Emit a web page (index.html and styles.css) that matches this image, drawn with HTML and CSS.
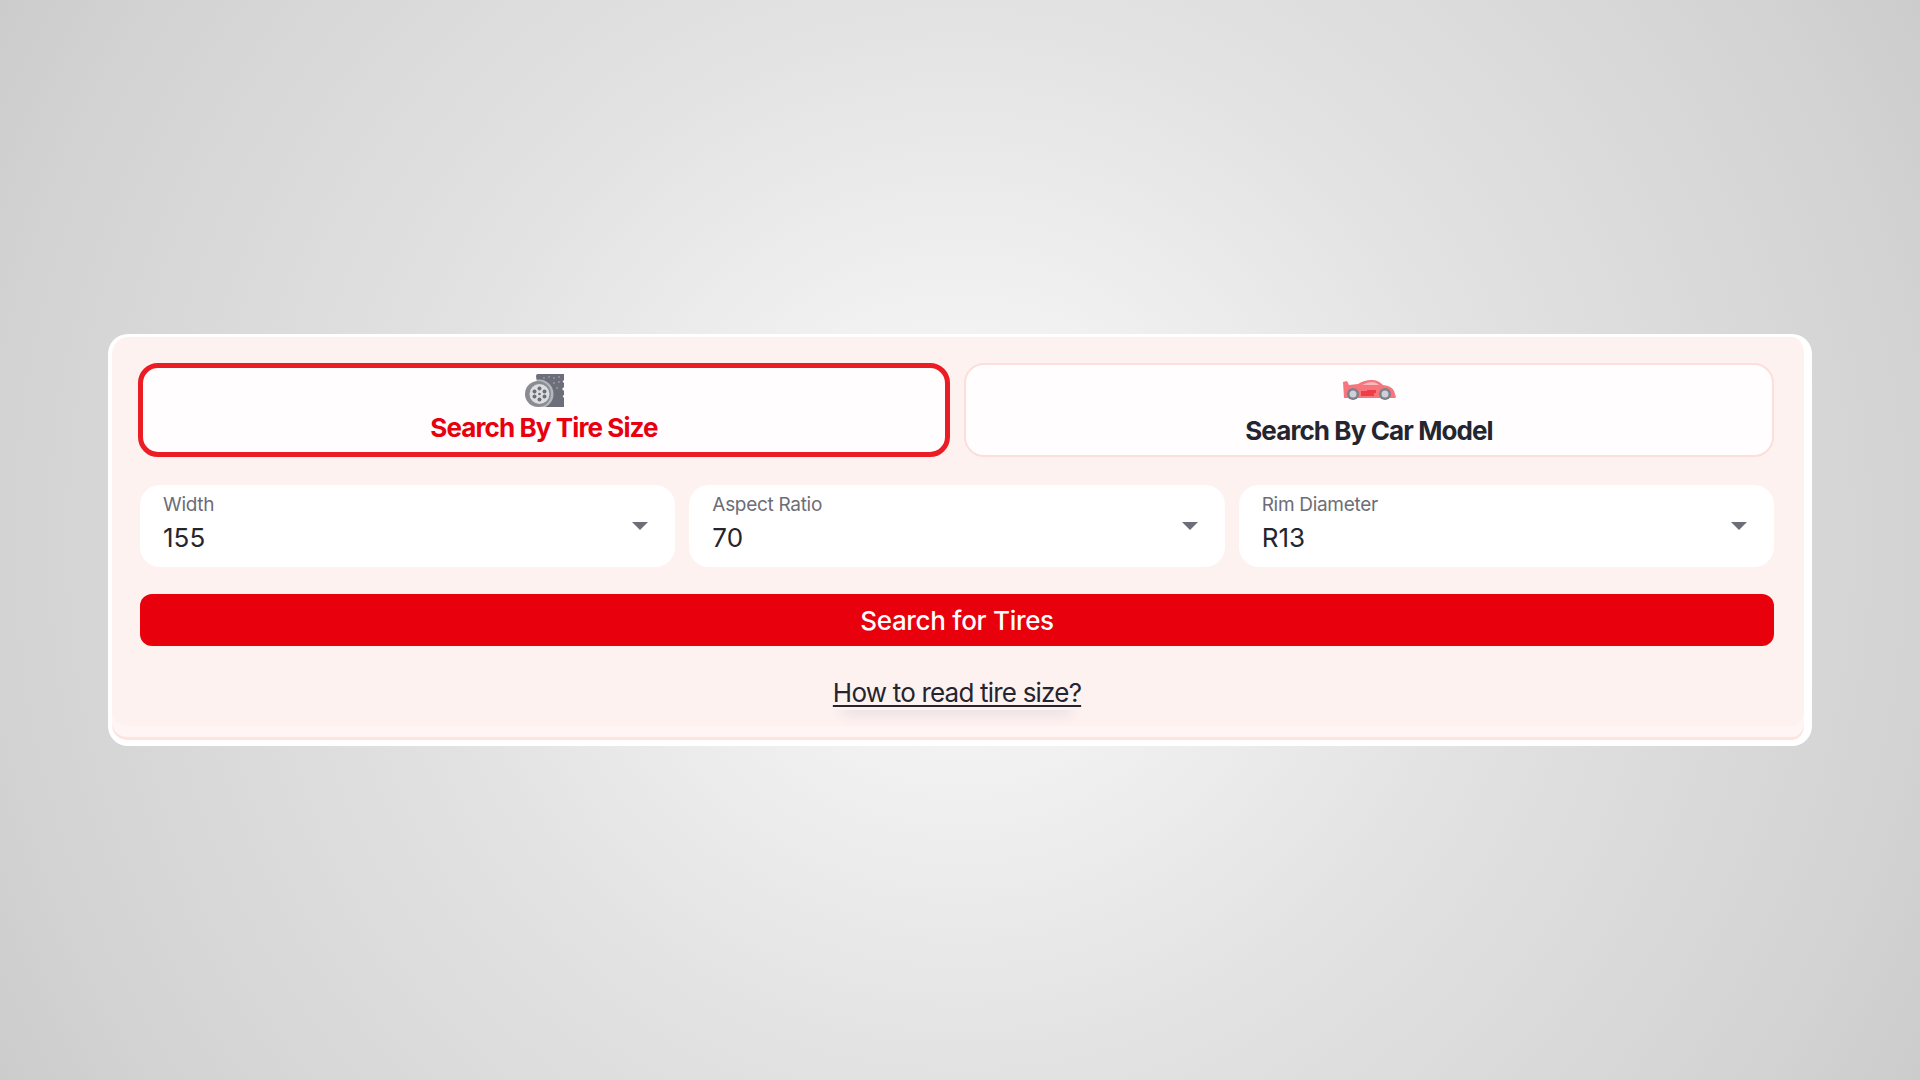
FILE: index.html
```html
<!DOCTYPE html>
<html lang="en">
<head>
    <meta charset="UTF-8">
    <title>Tire Search</title>
    <link rel="stylesheet" href="styles.css">
</head>
<body>
    <div class="search-card">
        <div class="tabs">
            <div class="tab active">
                <svg class="tab-icon tire-icon" viewBox="0 0 40 33">
                    <path d="M12 2q0-2 2-2h26v6l-1.500 1.500 1.500 1.500v4l-2 2 2 2v4l-1.500 1 1.500 2v9H16z" fill="#6c6e7a"/>
                    <g fill="#b5b6bd">
                        <circle cx="20" cy="4" r="0.8"/>
                        <circle cx="25" cy="3" r="0.8"/>
                        <circle cx="30" cy="4" r="0.8"/>
                        <circle cx="35" cy="3" r="0.8"/>
                        <circle cx="30" cy="9" r="0.8"/>
                        <circle cx="35" cy="8" r="0.8"/>
                        <circle cx="33" cy="14" r="0.8"/>
                    </g>
                    <circle cx="15" cy="20" r="14.500" fill="#fff" opacity="0.5"/>
                    <circle cx="14" cy="20" r="13" fill="#8a8c94"/>
                    <circle cx="15.500" cy="20" r="10" fill="#dcdde0"/>
                    <g fill="#6c6e7a">
                        <circle cx="15.500" cy="14.500" r="2"/>
                        <circle cx="15.500" cy="25.500" r="2"/>
                        <circle cx="10.500" cy="17.500" r="2"/>
                        <circle cx="20.500" cy="17.500" r="2"/>
                        <circle cx="10.500" cy="22.500" r="2"/>
                        <circle cx="20.500" cy="22.500" r="2"/>
                        <circle cx="15.500" cy="20" r="1.300"/>
                    </g>
                </svg>
                <span>Search By Tire Size</span>
            </div>
            <div class="tab">
                <svg class="tab-icon car-icon" viewBox="0 0 53 21">
                    <path d="M0 3l4-1 2 4 9-1q6-4 14-4 6 0 11 5 9 1 11 6l2 6-1 1H1z" fill="#f7767e"/>
                    <path d="M19 6q5-3 10-3 4 0 7 3z" fill="#fcb9bc"/>
                    <path d="M18 12h6v-1h9v3h-2v3h-13z" fill="#ee2a36" opacity="0.75"/>
                    <circle cx="10" cy="15" r="6" fill="#7d7f89"/>
                    <circle cx="10" cy="15" r="3.500" fill="#cfd0d5"/>
                    <circle cx="42" cy="15" r="6" fill="#7d7f89"/>
                    <circle cx="42" cy="15" r="3.500" fill="#cfd0d5"/>
                </svg>
                <span>Search By Car Model</span>
            </div>
        </div>

        <div class="fields">
            <div class="field">
                <div class="field-text">
                    <label>Width</label>
                    <div class="value">155</div>
                </div>
                <div class="caret"></div>
            </div>
            <div class="field">
                <div class="field-text">
                    <label>Aspect Ratio</label>
                    <div class="value">70</div>
                </div>
                <div class="caret"></div>
            </div>
            <div class="field">
                <div class="field-text">
                    <label>Rim Diameter</label>
                    <div class="value">R13</div>
                </div>
                <div class="caret"></div>
            </div>
        </div>

        <button class="search-button">Search for Tires</button>

        <div class="help">
            <a href="#" class="help-link">How to read tire size?</a>
        </div>
    </div>
</body>
</html>
```

FILE: styles.css
```css
* {
    box-sizing: border-box;
}
body {
    margin: 0;
    height: 100vh;
    display: flex;
    align-items: center;
    justify-content: center;
    font-family: "Inter", "Liberation Sans", sans-serif;
    color: #25252f;
    background: radial-gradient(circle at center, #fcfcfc 0%, #f2f2f2 19%, #e2e2e2 49%, #d3d3d3 87%, #cccccc 100%);
}
.search-card {
    width: 1704px;
    height: 412px;
    padding: 26px 30px 0 28px;
    background-color: #fef2f1;
    border: solid #fff;
    border-width: 3px 8px 6px 4px;
    border-radius: 20px;
    box-shadow: inset 0 -3px 0 #fee3e0, inset 0 -14px 0 #fff5f4;
}
.tabs {
    display: grid;
    grid-template-columns: 1fr 1fr;
    gap: 14px;
}
.tab {
    height: 94px;
    display: flex;
    flex-direction: column;
    align-items: center;
    background-color: #fffdfd;
    border: 2px solid #fcdedb;
    border-radius: 20px;
    padding-top: 14px;
    font-size: 26px;
    font-weight: 700;
    letter-spacing: -0.9px;
    line-height: 32px;
}
.tab.active {
    margin-left: -2px;
    border: 5px solid #ec1c24;
    padding-top: 6px;
    color: #e8000f;
}
.tab-icon {
    display: block;
    flex-shrink: 0;
}
.tire-icon {
    width: 40px;
    height: 33px;
    margin-bottom: 5px;
}
.car-icon {
    width: 53px;
    height: 21px;
    margin-bottom: 15px;
}
.fields {
    display: grid;
    grid-template-columns: repeat(3, 1fr);
    gap: 14px;
    margin-top: 28px;
}
.field {
    height: 82px;
    display: flex;
    align-items: center;
    justify-content: space-between;
    padding: 0 27px 0 23px;
    background-color: #fff;
    border-radius: 20px;
}
.field-text {
    padding-bottom: 4px;
}
.field label {
    display: block;
    font-size: 19px;
    line-height: 24px;
    letter-spacing: -0.3px;
    color: #6d6d78;
}
.value {
    margin-top: 4px;
    font-size: 26px;
    line-height: 34px;
    font-weight: 400;
}
.caret {
    width: 0;
    height: 0;
    border-left: 8px solid transparent;
    border-right: 8px solid transparent;
    border-top: 8px solid #6c6e7a;
}
.search-button {
    display: block;
    width: 100%;
    height: 52px;
    margin-top: 27px;
    border: none;
    border-radius: 12px;
    background-color: #e8000c;
    color: #fff;
    font-family: inherit;
    font-size: 26px;
    font-weight: 500;
    letter-spacing: -0.3px;
}
.help {
    margin-top: 30px;
    text-align: center;
}
.help-link {
    display: inline-block;
    font-size: 26px;
    line-height: 34px;
    letter-spacing: -0.8px;
    color: #25252f;
    text-decoration: underline;
    text-underline-offset: 3px;
    box-shadow: 0 14px 14px -10px rgba(40, 40, 60, 0.1);
}
```
